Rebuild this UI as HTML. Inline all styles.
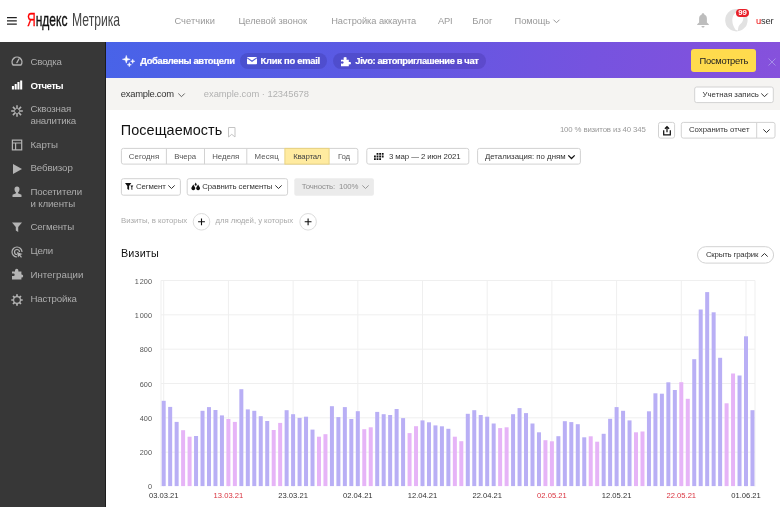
<!DOCTYPE html>
<html lang="ru">
<head>
<meta charset="utf-8">
<title>Яндекс Метрика — Посещаемость</title>
<style>
*{box-sizing:border-box;margin:0;padding:0}
html,body{width:780px;height:507px;overflow:hidden;background:#fff}
body{font-family:"Liberation Sans",sans-serif;color:#333;position:relative;font-size:10px}
.abs{position:absolute;white-space:nowrap}
/* header */
#hdr{left:0;top:0;width:780px;height:42px;background:#fff}
.nav{top:14px;font-size:10px;color:#999;line-height:14px}
.lg{top:9.1px;font-size:18.6px;line-height:22px;transform-origin:0 50%}
#logo1{left:26.5px;color:#111;transform:scaleX(.646);-webkit-text-stroke:.35px #111}
#logo1 b{font-weight:normal;color:#f00;-webkit-text-stroke:.35px #f00}
#logo2{left:71.8px;color:#444;transform:scaleX(.654)}
/* sidebar */
#side{left:0;top:42px;width:106px;height:465px;background:#373737;border-right:1px solid #1c1c1c}
.mi{left:30px;font-size:10.5px;line-height:12px;color:#b0b0b0}
.mi.act{color:#fff;font-weight:bold}
.ic{position:absolute;left:9px;width:14px;height:14px}
/* banner */
#ban{left:106px;top:42px;width:674px;height:36px;background:linear-gradient(97deg,#4863e8 0%,#5c59e3 38%,#7653df 72%,#8651dc 100%)}
.pill{top:53px;height:15.500px;border-radius:8px;background:rgba(30,20,100,.17)}
.bt{top:54px;font-size:9.7px;line-height:14px;font-weight:bold;color:#fff;letter-spacing:-.15px}
#ybtn{left:691px;top:49px;width:65px;height:23px;border-radius:3px;background:#ffdb4d;font-size:10px;line-height:23px;text-align:center;color:#222}
/* gray bar */
#gbar{left:106px;top:78px;width:674px;height:31.5px;background:#f5f4f2}
.btn{background:#fff;border:1px solid #d5d5d5;border-radius:2px;font-size:8.6px;line-height:14px;color:#444;height:16px}
.seg{top:148.5px;height:16px;border:1px solid #d9d9d9;border-left:none;background:#fff;font-size:8.6px;line-height:14px;color:#555;text-align:center}
.gr{color:#aaa}
.circ{width:17px;height:17px;border-radius:50%;border:1px solid #ddd;background:#fff}
.circ:before,.circ:after{content:"";position:absolute;background:#222}
.circ:before{left:4px;top:7px;width:7px;height:1px}
.circ:after{left:7px;top:4px;width:1px;height:7px}
svg{position:absolute;overflow:visible}
#root{position:absolute;left:0;top:0;width:780px;height:507px;will-change:transform}
</style>
</head>
<body>
<div id="root">
<!-- HEADER -->
<div id="hdr" class="abs"></div>
<svg style="left:6.5px;top:17.400px" width="10" height="8" viewBox="0 0 10 8"><path d="M0 .7h9.800M0 3.900h9.800M0 7.100h9.800" stroke="#222" stroke-width="1.200" fill="none"/></svg>
<div id="logo1" class="abs lg"><b>Я</b>ндекс</div>
<div id="logo2" class="abs lg">Метрика</div>
<svg style="left:553px;top:19px" width="7" height="5" viewBox="0 0 7 5"><path d="M.5.7l3 3 3-3" stroke="#999" stroke-width="1" fill="none"/></svg>
<!-- bell -->
<svg style="left:697px;top:12.500px" width="12" height="15" viewBox="0 0 12 15"><path d="M6 .2c.8 0 1.300.5 1.300 1.200 1.800.6 2.600 2.200 2.600 4.200v3.800l1.900 1.800v.9h-11.600v-.9l1.900-1.800v-3.800c0-2 .8-3.600 2.600-4.200 0-.7.500-1.200 1.300-1.200zM4.500 12.900h3c0 1-.6 1.600-1.500 1.600s-1.500-.6-1.500-1.600z" fill="#bdbdbd"/></svg>
<!-- avatar -->
<svg style="left:724px;top:9px" width="25" height="23" viewBox="0 0 25 23"><circle cx="12.400" cy="11.200" r="11.200" fill="#e2e2e2"/><path d="M11.500 20.800C10 18 8.300 15.500 8.300 11.500C8.300 6.500 11 3 14.500 3C17.800 3 19.500 6 19.300 9.500C19.100 12.700 17 14.500 15.500 16C14.500 17.200 14 19 13.900 21.800Z" fill="#fff"/></svg>
<div class="abs" style="left:735.900px;top:9px;width:13px;height:8px;border-radius:4px;background:#e8202a;color:#fff;font-size:7.800px;line-height:8.400px;letter-spacing:-.2px;text-align:center;font-weight:bold">99</div>

<!-- SIDEBAR -->
<div id="side" class="abs"></div>
<svg style="left:10.0px;top:54.2px" width="14" height="14" viewBox="0 0 14 14"><path d="M3.130 11A4.900 4.900 0 1 1 10.870 11Z" fill="none" stroke="#b4b4b4" stroke-width="1.400" stroke-linejoin="round"/><path d="M6.900 8.600L8.900 5" stroke="#b4b4b4" stroke-width="1.300" stroke-linecap="round"/></svg>
<svg style="left:10.0px;top:78.3px" width="14" height="14" viewBox="0 0 14 14"><path d="M1.900 8h2.050v3.500h-2.050zM4.650 6h2.050v5.500h-2.050zM7.400 4h2.050v7.500h-2.050zM10.150 2.500h2.050v9h-2.050z" fill="#fff"/></svg>
<svg style="left:10.0px;top:103.5px" width="14" height="14" viewBox="0 0 14 14"><g stroke="#b4b4b4" stroke-width="1.500" fill="none"><path d="M7 1.200v3.800M7 9v3.800M1.200 7h3.800M9 7h3.800M2.900 2.900l2.700 2.700M8.400 8.400l2.700 2.700M2.900 11.100l2.700-2.700M8.400 5.600l2.700-2.700"/></g></svg>
<svg style="left:10.0px;top:137.5px" width="14" height="14" viewBox="0 0 14 14"><path d="M2.400 2.200h9.300v9.700h-9.300zM2.400 5h9.300M5.600 5v7" stroke="#b4b4b4" stroke-width="1.200" fill="none"/></svg>
<svg style="left:10.0px;top:162.0px" width="14" height="14" viewBox="0 0 14 14"><path d="M3 2l9 5-9 5z" fill="#b4b4b4"/></svg>
<svg style="left:10.0px;top:185.3px" width="14" height="14" viewBox="0 0 14 14"><path d="M7 1.500a2.500 2.800 0 0 1 2.500 2.800c0 1.500-.8 2.700-1.500 3.200v.8l3.500 1.500v2.200h-9v-2.200l3.500-1.500v-.8c-.7-.5-1.500-1.700-1.500-3.200a2.500 2.800 0 0 1 2.500-2.800z" fill="#b4b4b4"/></svg>
<svg style="left:10.0px;top:220.4px" width="14" height="14" viewBox="0 0 14 14"><path d="M2 2.500h10l-3.800 4.500v5l-2.400-1.500v-3.500z" fill="#b4b4b4"/></svg>
<svg style="left:10.0px;top:244.6px" width="14" height="14" viewBox="0 0 14 14"><g stroke="#b4b4b4" stroke-width="1.200" fill="none"><path d="M12 7a5 5 0 1 0-5 5"/><path d="M9.500 7a2.500 2.500 0 1 0-2.500 2.500"/></g><path d="M7 7l5.500 2-2.200 1 1.700 2-1 .8-1.700-2-1.300 1.700z" fill="#b4b4b4"/></svg>
<svg style="left:10.0px;top:267.2px" width="14" height="14" viewBox="0 0 14 14"><path d="M5 3.500a1.700 1.700 0 1 1 3.400 0v1h3v3h.3a1.500 1.500 0 1 1 0 3h-.3v2h-9.400v-3.500h1a1.300 1.300 0 1 0 0-2.500h-1v-2h3z" fill="#b4b4b4"/></svg>
<svg style="left:10.0px;top:293.3px" width="14" height="14" viewBox="0 0 14 14"><g fill="none" stroke="#b4b4b4"><circle cx="7" cy="7" r="3.400" stroke-width="1.200"/><path d="M7 1.300v2M7 10.700v2M1.300 7h2M10.700 7h2M3 3l1.400 1.400M9.600 9.600l1.400 1.400M3 11l1.400-1.400M9.600 4.400l1.400-1.400" stroke-width="1.700"/></g></svg>

<!-- BANNER -->
<div id="ban" class="abs"></div>
<svg style="left:122px;top:55px" width="13" height="12" viewBox="0 0 13 12"><path d="M4.30 0.40L5.21 3.39L8.20 4.30L5.21 5.21L4.30 8.20L3.39 5.21L0.40 4.30L3.39 3.39ZM10.70 4.20L11.19 5.81L12.80 6.30L11.19 6.79L10.70 8.40L10.21 6.79L8.60 6.30L10.21 5.81ZM7.30 7.60L7.79 9.21L9.40 9.70L7.79 10.19L7.30 11.80L6.81 10.19L5.20 9.70L6.81 9.21Z" fill="#fff" stroke="#fff" stroke-width=".5" stroke-linejoin="round"/></svg>
<div class="abs pill" style="left:240px;width:86.500px"></div>
<svg style="left:246.800px;top:57.200px" width="10" height="7.200" viewBox="0 0 10 7.200"><rect width="10" height="7.200" rx=".8" fill="#fff"/><path d="M.2 .9l4.800 3.400 4.800-3.400" stroke="#5059d6" stroke-width="1.050" fill="none"/></svg>
<div class="abs pill" style="left:333px;width:153px"></div>
<svg style="left:340.500px;top:56.500px" width="9.200" height="9.200" viewBox="0 0 10 10"><path d="M3 2.200a1.600 1.600 0 1 1 3 0v.8h2.500v2.500h.3a1.400 1.400 0 1 1 0 2.500h-.3v2h-8.500v-3h1a1.200 1.200 0 1 0 0-2h-1v-2h3z" fill="#fff"/></svg>
<div id="ybtn" class="abs"></div>
<svg style="left:767.800px;top:57.500px" width="8" height="8" viewBox="0 0 8 8"><path d="M.5.5l7 7M7.500.5l-7 7" stroke="#a48ce8" stroke-width="1" fill="none"/></svg>

<!-- GRAY BAR -->
<div id="gbar" class="abs"></div>
<svg style="left:0;top:0" width="780" height="507" viewBox="0 0 780 507" fill="none">
<rect x="694.7" y="87.0" width="78.6" height="15.6" rx="2" fill="#fff" stroke="#d2d2d2"/>
<rect x="658.5" y="122.4" width="16.1" height="15.7" rx="2" fill="#fff" stroke="#d2d2d2"/>
<rect x="681.3" y="122.4" width="93.7" height="15.7" rx="2" fill="#fff" stroke="#d2d2d2"/>
<path d="M756.7 122.4V138.1" stroke="#d2d2d2"/>
<rect x="121.4" y="148.4" width="236.5" height="15.7" rx="2" fill="#fff" stroke="#d2d2d2"/>
<rect x="284.9" y="148.4" width="44.2" height="15.7" fill="#ffeba0" stroke="#e8d282"/>
<path d="M166.4 148.4V164.1" stroke="#d2d2d2"/>
<path d="M204.5 148.4V164.1" stroke="#d2d2d2"/>
<path d="M246.8 148.4V164.1" stroke="#d2d2d2"/>
<rect x="366.8" y="148.4" width="102.0" height="15.7" rx="2" fill="#fff" stroke="#d2d2d2"/>
<rect x="477.6" y="148.4" width="102.8" height="15.7" rx="2" fill="#fff" stroke="#d2d2d2"/>
<rect x="121.4" y="178.7" width="59.0" height="16.5" rx="2" fill="#fff" stroke="#d2d2d2"/>
<rect x="187.2" y="178.7" width="100.4" height="16.5" rx="2" fill="#fff" stroke="#d2d2d2"/>
<rect x="294.3" y="178.2" width="79.6" height="17.5" rx="2" fill="#ebebeb"/>
<circle cx="201.5" cy="221.8" r="8.300" fill="#fff" stroke="#dcdcdc"/>
<path d="M198.1 221.800h6.800M201.5 218.400v6.800" stroke="#111" stroke-width="1.100"/>
<circle cx="308.1" cy="221.8" r="8.300" fill="#fff" stroke="#dcdcdc"/>
<path d="M304.7 221.800h6.800M308.1 218.400v6.800" stroke="#111" stroke-width="1.100"/>
<rect x="697.5" y="246.7" width="76.1" height="16.4" rx="8.2" fill="#fff" stroke="#d2d2d2"/>
</svg>
<svg style="left:178px;top:92.500px" width="7" height="5" viewBox="0 0 7 5"><path d="M.3.500l3.200 3.200 3.200-3.200" stroke="#555" stroke-width=".9" fill="none"/></svg>
<svg style="left:760.500px;top:92.500px" width="7" height="5" viewBox="0 0 7 5"><path d="M.3.500l3.200 3.200 3.200-3.200" stroke="#333" stroke-width="1" fill="none"/></svg>

<!-- TITLE ROW -->
<svg style="left:228px;top:126.500px" width="8" height="11" viewBox="0 0 8 11"><path d="M.5.500h6.500v9.500l-3.250-2.700-3.250 2.700z" stroke="#c4c4c4" stroke-width="1" fill="none"/></svg>
<svg style="left:662.700px;top:126px" width="8" height="10" viewBox="0 0 8 10"><path d="M4 6.300v-5.300M1.900 2.700l2.100-2.100 2.100 2.100M.7 4.300v4.500h6.600v-4.500" stroke="#111" stroke-width="1.250" fill="none"/></svg>
<svg style="left:763.200px;top:129px" width="7" height="4" viewBox="0 0 7 4"><path d="M.3.400l3.200 3.100 3.200-3.100" stroke="#333" stroke-width="1" fill="none"/></svg>

<!-- PERIOD ROW -->
<svg style="left:373.600px;top:152.800px" width="10" height="7" viewBox="0 0 10 7"><path d="M2.6 0.0h1.800v1.800h-1.800zM5.2 0.0h1.800v1.800h-1.800zM7.8 0.0h1.800v1.800h-1.800zM0.0 2.6h1.800v1.800h-1.800zM2.6 2.6h1.800v1.800h-1.800zM5.2 2.6h1.800v1.800h-1.800zM7.8 2.6h1.800v1.800h-1.800zM0.0 5.2h1.800v1.800h-1.800zM2.6 5.2h1.800v1.800h-1.800zM5.2 5.2h1.800v1.800h-1.800z" fill="#111"/></svg>
<svg style="left:567.700px;top:154.800px" width="7" height="4" viewBox="0 0 7 4"><path d="M.3.400l3.200 3.100 3.200-3.100" stroke="#111" stroke-width="1.300" fill="none"/></svg>

<!-- SEGMENT ROW -->
<svg style="left:125px;top:183px" width="9" height="7" viewBox="0 0 9 7"><path d="M0 0h6.400l-2.300 3v3.900l-1.800-1v-2.900zM5.400 2.500h2.900l-1 1.400v3l-.9-.5v-2.500z" fill="#111"/></svg>
<svg style="left:168.300px;top:185.300px" width="7" height="4" viewBox="0 0 7 4"><path d="M.3.400l3.200 3.100 3.200-3.100" stroke="#333" stroke-width="1" fill="none"/></svg>
<svg style="left:190.600px;top:182.900px" width="10" height="8" viewBox="0 0 10 8"><path d="M2.30 1.40L4.09 4.44A1.95 1.95 0 1 1 0.51 4.44ZM7.10 1.40L8.89 4.44A1.95 1.95 0 1 1 5.31 4.44ZM4.70 -0.40L5.67 1.29A1.05 1.05 0 1 1 3.73 1.29Z" fill="#111"/></svg>
<svg style="left:275px;top:185.300px" width="7" height="4" viewBox="0 0 7 4"><path d="M.3.400l3.200 3.100 3.200-3.100" stroke="#333" stroke-width="1" fill="none"/></svg>
<svg style="left:361.500px;top:185.300px" width="7" height="4" viewBox="0 0 7 4"><path d="M.3.400l3.200 3.100 3.200-3.100" stroke="#999" stroke-width="1" fill="none"/></svg>

<!-- FILTER ROW -->

<!-- CHART HEADER -->
<svg style="left:761.200px;top:252.900px" width="7" height="4" viewBox="0 0 7 4"><path d="M.3 3.600l3.200-3.100 3.200 3.100" stroke="#333" stroke-width="1" fill="none"/></svg>

<!-- CHART -->
<svg style="left:0;top:0" width="780" height="507" viewBox="0 0 780 507" font-family="Liberation Sans, sans-serif">
<g stroke="#efefef" stroke-width="1" fill="none">
<path d="M161 280.500H755M161 314.800H755M161 349.200H755M161 383.500H755M161 417.800H755M161 452.200H755"/>
<path d="M161 280.500V486.500M755 280.500V486.500"/>
<path d="M163.700 280.500V486.500M228.400 280.500V486.500M293.100 280.500V486.500M357.800 280.500V486.500M422.500 280.500V486.500M487.200 280.500V486.500M551.900 280.500V486.500M616.600 280.500V486.500M681.300 280.500V486.500M746 280.500V486.500"/>
</g>
<rect x="161.70" y="400.8" width="4.0" height="85.3" fill="#b9aff5"/>
<rect x="168.17" y="406.9" width="4.0" height="79.2" fill="#b9aff5"/>
<rect x="174.64" y="421.9" width="4.0" height="64.2" fill="#b9aff5"/>
<rect x="181.11" y="430.2" width="4.0" height="55.9" fill="#e6b4f7"/>
<rect x="187.58" y="436.7" width="4.0" height="49.4" fill="#e6b4f7"/>
<rect x="194.05" y="436.0" width="4.0" height="50.1" fill="#b9aff5"/>
<rect x="200.52" y="410.8" width="4.0" height="75.3" fill="#b9aff5"/>
<rect x="206.99" y="407.1" width="4.0" height="79.0" fill="#b9aff5"/>
<rect x="213.46" y="410.0" width="4.0" height="76.1" fill="#b9aff5"/>
<rect x="219.93" y="415.4" width="4.0" height="70.7" fill="#b9aff5"/>
<rect x="226.40" y="419.0" width="4.0" height="67.1" fill="#e6b4f7"/>
<rect x="232.87" y="421.9" width="4.0" height="64.2" fill="#e6b4f7"/>
<rect x="239.34" y="389.2" width="4.0" height="96.9" fill="#b9aff5"/>
<rect x="245.81" y="409.4" width="4.0" height="76.7" fill="#b9aff5"/>
<rect x="252.28" y="410.8" width="4.0" height="75.3" fill="#b9aff5"/>
<rect x="258.75" y="416.2" width="4.0" height="69.9" fill="#b9aff5"/>
<rect x="265.22" y="421.0" width="4.0" height="65.1" fill="#b9aff5"/>
<rect x="271.69" y="430.0" width="4.0" height="56.1" fill="#e6b4f7"/>
<rect x="278.16" y="422.9" width="4.0" height="63.2" fill="#e6b4f7"/>
<rect x="284.63" y="410.2" width="4.0" height="75.9" fill="#b9aff5"/>
<rect x="291.10" y="414.2" width="4.0" height="71.9" fill="#b9aff5"/>
<rect x="297.57" y="417.9" width="4.0" height="68.2" fill="#b9aff5"/>
<rect x="304.04" y="416.7" width="4.0" height="69.4" fill="#b9aff5"/>
<rect x="310.51" y="429.6" width="4.0" height="56.5" fill="#b9aff5"/>
<rect x="316.98" y="436.7" width="4.0" height="49.4" fill="#e6b4f7"/>
<rect x="323.45" y="434.2" width="4.0" height="51.9" fill="#e6b4f7"/>
<rect x="329.92" y="406.2" width="4.0" height="79.9" fill="#b9aff5"/>
<rect x="336.39" y="417.1" width="4.0" height="69.0" fill="#b9aff5"/>
<rect x="342.86" y="407.1" width="4.0" height="79.0" fill="#b9aff5"/>
<rect x="349.33" y="419.0" width="4.0" height="67.1" fill="#b9aff5"/>
<rect x="355.80" y="411.2" width="4.0" height="74.9" fill="#b9aff5"/>
<rect x="362.27" y="429.2" width="4.0" height="56.9" fill="#e6b4f7"/>
<rect x="368.74" y="427.3" width="4.0" height="58.8" fill="#e6b4f7"/>
<rect x="375.21" y="411.9" width="4.0" height="74.2" fill="#b9aff5"/>
<rect x="381.68" y="414.2" width="4.0" height="71.9" fill="#b9aff5"/>
<rect x="388.15" y="415.0" width="4.0" height="71.1" fill="#b9aff5"/>
<rect x="394.62" y="409.0" width="4.0" height="77.1" fill="#b9aff5"/>
<rect x="401.09" y="418.1" width="4.0" height="68.0" fill="#b9aff5"/>
<rect x="407.56" y="433.1" width="4.0" height="53.0" fill="#e6b4f7"/>
<rect x="414.03" y="426.2" width="4.0" height="59.9" fill="#e6b4f7"/>
<rect x="420.50" y="420.4" width="4.0" height="65.7" fill="#b9aff5"/>
<rect x="426.97" y="422.3" width="4.0" height="63.8" fill="#b9aff5"/>
<rect x="433.44" y="425.4" width="4.0" height="60.7" fill="#b9aff5"/>
<rect x="439.91" y="426.3" width="4.0" height="59.8" fill="#b9aff5"/>
<rect x="446.38" y="428.8" width="4.0" height="57.3" fill="#b9aff5"/>
<rect x="452.85" y="436.7" width="4.0" height="49.4" fill="#e6b4f7"/>
<rect x="459.32" y="441.2" width="4.0" height="44.9" fill="#e6b4f7"/>
<rect x="465.79" y="413.8" width="4.0" height="72.3" fill="#b9aff5"/>
<rect x="472.26" y="410.2" width="4.0" height="75.9" fill="#b9aff5"/>
<rect x="478.73" y="415.0" width="4.0" height="71.1" fill="#b9aff5"/>
<rect x="485.20" y="416.7" width="4.0" height="69.4" fill="#b9aff5"/>
<rect x="491.67" y="423.5" width="4.0" height="62.6" fill="#b9aff5"/>
<rect x="498.14" y="428.1" width="4.0" height="58.0" fill="#e6b4f7"/>
<rect x="504.61" y="427.3" width="4.0" height="58.8" fill="#e6b4f7"/>
<rect x="511.08" y="414.2" width="4.0" height="71.9" fill="#b9aff5"/>
<rect x="517.55" y="408.1" width="4.0" height="78.0" fill="#b9aff5"/>
<rect x="524.02" y="413.1" width="4.0" height="73.0" fill="#b9aff5"/>
<rect x="530.49" y="423.5" width="4.0" height="62.6" fill="#b9aff5"/>
<rect x="536.96" y="432.3" width="4.0" height="53.8" fill="#b9aff5"/>
<rect x="543.43" y="440.2" width="4.0" height="45.9" fill="#e6b4f7"/>
<rect x="549.90" y="441.3" width="4.0" height="44.8" fill="#e6b4f7"/>
<rect x="556.37" y="436.2" width="4.0" height="49.9" fill="#b9aff5"/>
<rect x="562.84" y="421.2" width="4.0" height="64.9" fill="#b9aff5"/>
<rect x="569.31" y="422.1" width="4.0" height="64.0" fill="#b9aff5"/>
<rect x="575.78" y="424.2" width="4.0" height="61.9" fill="#b9aff5"/>
<rect x="582.25" y="437.3" width="4.0" height="48.8" fill="#b9aff5"/>
<rect x="588.72" y="436.3" width="4.0" height="49.8" fill="#e6b4f7"/>
<rect x="595.19" y="441.7" width="4.0" height="44.4" fill="#e6b4f7"/>
<rect x="601.66" y="433.8" width="4.0" height="52.3" fill="#b9aff5"/>
<rect x="608.13" y="418.8" width="4.0" height="67.3" fill="#b9aff5"/>
<rect x="614.60" y="407.1" width="4.0" height="79.0" fill="#b9aff5"/>
<rect x="621.07" y="410.8" width="4.0" height="75.3" fill="#b9aff5"/>
<rect x="627.54" y="420.4" width="4.0" height="65.7" fill="#b9aff5"/>
<rect x="634.01" y="432.3" width="4.0" height="53.8" fill="#e6b4f7"/>
<rect x="640.48" y="431.5" width="4.0" height="54.6" fill="#e6b4f7"/>
<rect x="646.95" y="411.3" width="4.0" height="74.8" fill="#b9aff5"/>
<rect x="653.42" y="393.3" width="4.0" height="92.8" fill="#b9aff5"/>
<rect x="659.89" y="393.7" width="4.0" height="92.4" fill="#b9aff5"/>
<rect x="666.36" y="382.3" width="4.0" height="103.8" fill="#b9aff5"/>
<rect x="672.83" y="390.0" width="4.0" height="96.1" fill="#b9aff5"/>
<rect x="679.30" y="382.2" width="4.0" height="103.9" fill="#e6b4f7"/>
<rect x="685.77" y="398.8" width="4.0" height="87.3" fill="#e6b4f7"/>
<rect x="692.24" y="359.2" width="4.0" height="126.9" fill="#b9aff5"/>
<rect x="698.71" y="309.5" width="4.0" height="176.6" fill="#b9aff5"/>
<rect x="705.18" y="292.1" width="4.0" height="194.0" fill="#b9aff5"/>
<rect x="711.65" y="312.3" width="4.0" height="173.8" fill="#b9aff5"/>
<rect x="718.12" y="357.8" width="4.0" height="128.3" fill="#b9aff5"/>
<rect x="724.59" y="403.3" width="4.0" height="82.8" fill="#e6b4f7"/>
<rect x="731.06" y="373.5" width="4.0" height="112.6" fill="#e6b4f7"/>
<rect x="737.53" y="375.5" width="4.0" height="110.6" fill="#b9aff5"/>
<rect x="744.00" y="336.3" width="4.0" height="149.8" fill="#b9aff5"/>
<rect x="750.47" y="410.2" width="4.0" height="75.9" fill="#b9aff5"/>
<g font-size="7.300" fill="#555" text-anchor="end" word-spacing="-1.100">
<text x="152" y="283.600">1 200</text>
<text x="152" y="317.900">1 000</text>
<text x="152" y="352.200">800</text>
<text x="152" y="386.600">600</text>
<text x="152" y="420.900">400</text>
<text x="152" y="455.200">200</text>
<text x="152" y="489.400">0</text>
</g>
<g font-size="7.600" fill="#333" text-anchor="middle">
<text x="163.700" y="497.800">03.03.21</text>
<text x="228.400" y="497.800" fill="#d9333f">13.03.21</text>
<text x="293.100" y="497.800">23.03.21</text>
<text x="357.800" y="497.800">02.04.21</text>
<text x="422.500" y="497.800">12.04.21</text>
<text x="487.200" y="497.800">22.04.21</text>
<text x="551.900" y="497.800" fill="#d9333f">02.05.21</text>
<text x="616.600" y="497.800">12.05.21</text>
<text x="681.300" y="497.800" fill="#d9333f">22.05.21</text>
<text x="746" y="497.800">01.06.21</text>
</g>
</svg>
<!-- TEXT LABELS -->
<div class="abs tx" id="n1" style="left:174.4px;top:15.3px;font-size:9.3px;line-height:12.1px;color:#999;letter-spacing:0.08px">Счетчики</div>
<div class="abs tx" id="n2" style="left:238.5px;top:15.3px;font-size:9.3px;line-height:12.1px;color:#999;letter-spacing:-0.02px">Целевой звонок</div>
<div class="abs tx" id="n3" style="left:331.2px;top:15.3px;font-size:9.3px;line-height:12.1px;color:#999;letter-spacing:-0.06px">Настройка аккаунта</div>
<div class="abs tx" id="n4" style="left:438.0px;top:15.3px;font-size:9.3px;line-height:12.1px;color:#999;letter-spacing:-0.20px">API</div>
<div class="abs tx" id="n5" style="left:472.2px;top:15.3px;font-size:9.3px;line-height:12.1px;color:#999;letter-spacing:0.03px">Блог</div>
<div class="abs tx" id="n6" style="left:514.5px;top:15.3px;font-size:9.3px;line-height:12.1px;color:#999;letter-spacing:-0.05px">Помощь</div>
<div class="abs tx" id="user" style="left:756.0px;top:14.9px;font-size:9.3px;line-height:12.1px;color:#333;letter-spacing:-0.20px"><span style="color:#e00">u</span>ser</div>
<div class="abs tx" id="s1" style="left:30.4px;top:55.5px;font-size:9.7px;line-height:12.6px;color:#adadad;letter-spacing:-0.25px">Сводка</div>
<div class="abs tx" id="s2" style="left:30.4px;top:79.5px;font-size:9.7px;line-height:12.6px;color:#fff;font-weight:bold;letter-spacing:-0.60px">Отчеты</div>
<div class="abs tx" id="s3a" style="left:30.4px;top:103.3px;font-size:9.7px;line-height:12.6px;color:#adadad;letter-spacing:-0.17px">Сквозная</div>
<div class="abs tx" id="s3b" style="left:30.4px;top:115.3px;font-size:9.7px;line-height:12.6px;color:#adadad;letter-spacing:-0.14px">аналитика</div>
<div class="abs tx" id="s4" style="left:30.4px;top:138.5px;font-size:9.7px;line-height:12.6px;color:#adadad">Карты</div>
<div class="abs tx" id="s5" style="left:30.4px;top:162.3px;font-size:9.7px;line-height:12.6px;color:#adadad;letter-spacing:-0.08px">Вебвизор</div>
<div class="abs tx" id="s6a" style="left:30.4px;top:185.8px;font-size:9.7px;line-height:12.6px;color:#adadad;letter-spacing:-0.10px">Посетители</div>
<div class="abs tx" id="s6b" style="left:30.4px;top:197.8px;font-size:9.7px;line-height:12.6px;color:#adadad;letter-spacing:-0.11px">и клиенты</div>
<div class="abs tx" id="s7" style="left:30.4px;top:221.1px;font-size:9.7px;line-height:12.6px;color:#adadad;letter-spacing:-0.14px">Сегменты</div>
<div class="abs tx" id="s8" style="left:30.4px;top:245.0px;font-size:9.7px;line-height:12.6px;color:#adadad;letter-spacing:-0.17px">Цели</div>
<div class="abs tx" id="s9" style="left:30.4px;top:269.1px;font-size:9.7px;line-height:12.6px;color:#adadad;letter-spacing:0.03px">Интеграции</div>
<div class="abs tx" id="s10" style="left:30.4px;top:293.3px;font-size:9.7px;line-height:12.6px;color:#adadad;letter-spacing:-0.14px">Настройка</div>
<div class="abs tx" id="b1" style="left:140.2px;top:54.8px;font-size:9.4px;line-height:12.2px;color:#fff;font-weight:bold;letter-spacing:-0.32px;-webkit-text-stroke:.2px #fff">Добавлены автоцели</div>
<div class="abs tx" id="b2" style="left:260.5px;top:54.8px;font-size:9.4px;line-height:12.2px;color:#fff;font-weight:bold;letter-spacing:-0.25px;-webkit-text-stroke:.2px #fff">Клик по email</div>
<div class="abs tx" id="b3" style="left:355.3px;top:54.8px;font-size:9.4px;line-height:12.2px;color:#fff;font-weight:bold;letter-spacing:-0.38px;-webkit-text-stroke:.2px #fff">Jivo: автоприглашение в чат</div>
<div class="abs tx" id="b4" style="left:699.6px;top:54.6px;font-size:9.4px;line-height:12.2px;color:#222;letter-spacing:-0.31px">Посмотреть</div>
<div class="abs tx" id="g1" style="left:120.8px;top:88.1px;font-size:9.4px;line-height:12.2px;color:#333;letter-spacing:-0.26px">example.com</div>
<div class="abs tx" id="g2" style="left:203.8px;top:88.1px;font-size:9.4px;line-height:12.2px;color:#b2b2b2;letter-spacing:-0.03px">example.com · 12345678</div>
<div class="abs tx" id="g3" style="left:702.5px;top:89.8px;font-size:7.8px;line-height:10.1px;color:#333;letter-spacing:0.02px">Учетная запись</div>
<div class="abs tx" id="t1" style="left:120.8px;top:120.7px;font-size:14.4px;line-height:18.7px;color:#111;letter-spacing:0.08px">Посещаемость</div>
<div class="abs tx" id="t2" style="left:559.9px;top:125.4px;font-size:7.8px;line-height:10.1px;color:#999;letter-spacing:-0.13px">100 % визитов из 40 345</div>
<div class="abs tx" id="t3" style="left:688.9px;top:125.4px;font-size:7.8px;line-height:10.1px;color:#333;letter-spacing:0.02px">Сохранить отчет</div>
<div class="abs tx" id="p1" style="left:128.8px;top:151.5px;font-size:7.8px;line-height:10.1px;color:#555;letter-spacing:0.09px">Сегодня</div>
<div class="abs tx" id="p2" style="left:174.3px;top:151.5px;font-size:7.8px;line-height:10.1px;color:#555;letter-spacing:-0.04px">Вчера</div>
<div class="abs tx" id="p3" style="left:212.2px;top:151.5px;font-size:7.8px;line-height:10.1px;color:#555;letter-spacing:-0.05px">Неделя</div>
<div class="abs tx" id="p4" style="left:254.5px;top:151.5px;font-size:7.8px;line-height:10.1px;color:#555;letter-spacing:0.16px">Месяц</div>
<div class="abs tx" id="p5" style="left:293.2px;top:151.5px;font-size:7.8px;line-height:10.1px;color:#444;letter-spacing:-0.22px">Квартал</div>
<div class="abs tx" id="p6" style="left:338.1px;top:151.5px;font-size:7.8px;line-height:10.1px;color:#555;letter-spacing:-0.17px">Год</div>
<div class="abs tx" id="p7" style="left:389.0px;top:151.5px;font-size:7.8px;line-height:10.1px;color:#333;letter-spacing:-0.09px">3 мар — 2 июн 2021</div>
<div class="abs tx" id="p8" style="left:485.0px;top:151.5px;font-size:7.8px;line-height:10.1px;color:#333">Детализация: по дням</div>
<div class="abs tx" id="q1" style="left:136.0px;top:182.2px;font-size:7.8px;line-height:10.1px;color:#333;letter-spacing:-0.10px">Сегмент</div>
<div class="abs tx" id="q2" style="left:202.3px;top:182.2px;font-size:7.8px;line-height:10.1px;color:#333;letter-spacing:-0.07px">Сравнить сегменты</div>
<div class="abs tx" id="q3" style="left:301.7px;top:182.2px;font-size:7.8px;line-height:10.1px;color:#8e8e8e;letter-spacing:-0.16px">Точность:&nbsp; 100%</div>
<div class="abs tx" id="f1" style="left:121.0px;top:216.0px;font-size:7.8px;line-height:10.1px;color:#aaa;letter-spacing:-0.03px">Визиты, в которых</div>
<div class="abs tx" id="f2" style="left:215.5px;top:216.0px;font-size:7.8px;line-height:10.1px;color:#aaa;letter-spacing:-0.06px">для людей, у которых</div>
<div class="abs tx" id="c1" style="left:121.0px;top:246.3px;font-size:10.8px;line-height:14.0px;color:#111;letter-spacing:0.15px">Визиты</div>
<div class="abs tx" id="c2" style="left:705.9px;top:250.4px;font-size:7.8px;line-height:10.1px;color:#333;letter-spacing:-0.17px">Скрыть график</div>
</div>
</body>
</html>
